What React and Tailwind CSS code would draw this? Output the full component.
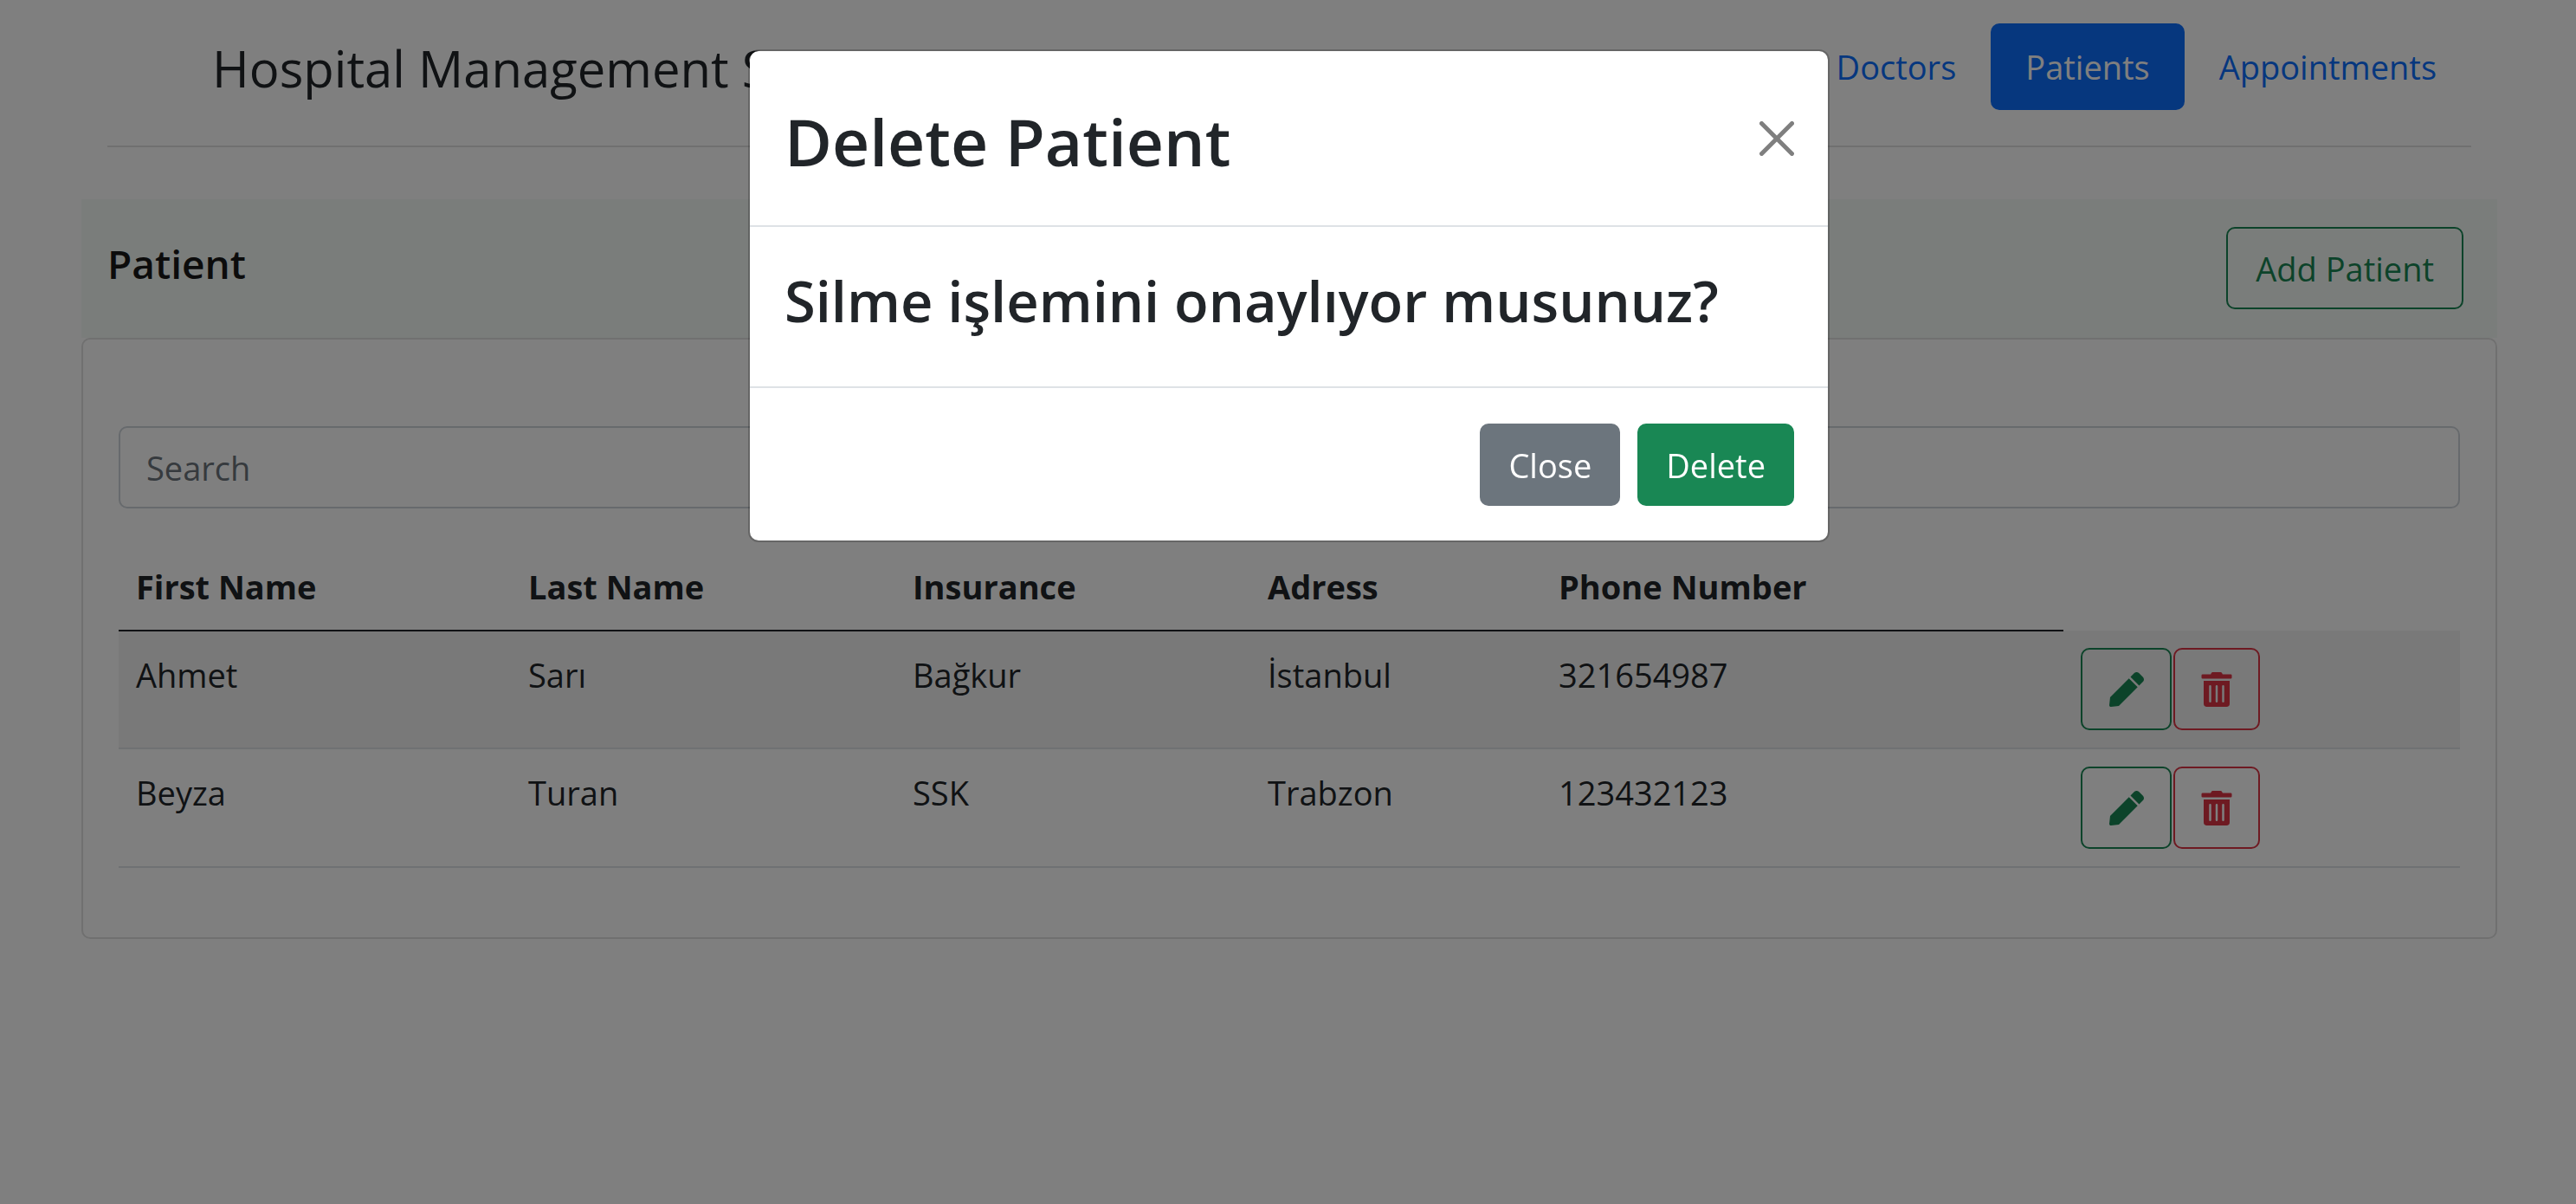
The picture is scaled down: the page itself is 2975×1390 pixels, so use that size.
import { FaPen, FaTrashAlt } from "react-icons/fa";

const patients = [
  { first: "Ahmet", last: "Sarı", insurance: "Bağkur", address: "İstanbul", phone: "321654987" },
  { first: "Beyza", last: "Turan", insurance: "SSK", address: "Trabzon", phone: "123432123" },
];

const headings = ["First Name", "Last Name", "Insurance", "Adress", "Phone Number"];

function Header() {
  return (
    <header className="ml-[124px] mr-[121px] flex items-start justify-between border-b-2 border-black/12 pb-[38px] pt-[27px]">
      <h1 className="ml-[121px] text-[58px] leading-[103px]">Hospital Management System</h1>
      <nav className="flex text-[38px] leading-[60px] text-[#0d6efd]">
        <a href="#doctors" className="rounded-[10px] px-10 py-5">Doctors</a>
        <a href="#patients" className="rounded-[10px] bg-[#0d6efd] px-10 py-5 text-white">Patients</a>
        <a href="#appointments" className="rounded-[10px] px-10 py-5">Appointments</a>
      </nav>
    </header>
  );
}

function PatientTable() {
  return (
    <table className="mt-10 w-full table-fixed border-collapse text-left">
      <colgroup>
        <col className="w-[453px]" />
        <col className="w-[444px]" />
        <col className="w-[410px]" />
        <col className="w-[336px]" />
        <col className="w-[603px]" />
        <col />
      </colgroup>
      <thead>
        <tr>
          {headings.map((h) => (
            <th key={h} className="border-b-2 border-[#212529] px-5 py-5 font-bold">{h}</th>
          ))}
          <td />
        </tr>
      </thead>
      <tbody>
        {patients.map((p) => (
          <tr key={p.first} className="border-b-2 border-[#dee2e6] align-top odd:bg-black/5">
            <td className="px-5 py-5">{p.first}</td>
            <td className="px-5 py-5">{p.last}</td>
            <td className="px-5 py-5">{p.insurance}</td>
            <td className="px-5 py-5">{p.address}</td>
            <td className="px-5 py-5">{p.phone}</td>
            <td className="px-5 py-5">
              <div className="flex gap-[2px]">
                <button aria-label={`Edit ${p.first}`} className="flex h-[95px] w-[105px] items-center justify-center rounded-[10px] border-2 border-[#198754] text-[#198754]">
                  <FaPen size={40} />
                </button>
                <button aria-label={`Delete ${p.first}`} className="flex h-[95px] w-[100px] items-center justify-center rounded-[10px] border-2 border-[#dc3545] text-[#dc3545]">
                  <FaTrashAlt size={40} />
                </button>
              </div>
            </td>
          </tr>
        ))}
      </tbody>
    </table>
  );
}

function DeleteDialog() {
  return (
    <div className="fixed inset-0 bg-black/50 pl-0.5">
      <div
        role="dialog"
        aria-modal="true"
        aria-labelledby="dialog-title"
        className="mx-auto mt-[57px] w-full max-w-[1249px] rounded-[12px] border-2 border-black/20 bg-white bg-clip-padding"
      >
        <div className="flex items-center justify-between border-b-2 border-[#dee2e6] py-[50px] pl-10 pr-[39px]">
          <h2 id="dialog-title" className="pt-2 text-[75px] font-semibold leading-[93px]">Delete Patient</h2>
          <button aria-label="Close dialog">
            <svg viewBox="0 0 16 16" className="size-10 fill-black/50">
              <path d="M.293.293a1 1 0 011.414 0L8 6.586 14.293.293a1 1 0 111.414 1.414L9.414 8l6.293 6.293a1 1 0 01-1.414 1.414L8 9.414l-6.293 6.293a1 1 0 01-1.414-1.414L6.586 8 .293 1.707a1 1 0 010-1.414z" />
            </svg>
          </button>
        </div>
        <div className="px-10 pb-[54px] pt-10">
          <h3 className="text-[65px] font-semibold leading-[90px]">Silme işlemini onaylıyor musunuz?</h3>
        </div>
        <div className="flex justify-end gap-5 border-t-2 border-[#dee2e6] px-[39px] pb-10 pt-[41px]">
          <button className="h-[95px] rounded-[10px] bg-[#6c757d] px-[33px] text-white">Close</button>
          <button className="h-[95px] rounded-[10px] bg-[#198754] px-[33px] text-white">Delete</button>
        </div>
      </div>
    </div>
  );
}

export default function App() {
  return (
    <div className="min-h-screen bg-white font-['Open_Sans','Noto_Sans',sans-serif] text-[38px] leading-[60px] text-[#212529]">
      <Header />
      <main className="ml-[94px] mr-[91px] mt-[60px]">
        <div className="flex items-start justify-between bg-[#f5faf7] pb-[33px] pl-[30px] pr-[39px] pt-8">
          <h2 className="pt-3 text-[46px] font-semibold leading-[60px] text-[#191919]">Patient</h2>
          <button className="h-[95px] rounded-[10px] border-2 border-[#198754] px-[32px] text-[#198754]">Add Patient</button>
        </div>
        <section className="rounded-[10px] border-2 border-black/12 px-[41px] pb-20 pt-[100px]">
          <input
            type="text"
            aria-label="Search"
            placeholder="Search"
            className="h-[95px] w-full rounded-[10px] border-2 border-[#ced4da] px-[30px] placeholder:text-[#6c757d]"
          />
          <PatientTable />
        </section>
      </main>
      <DeleteDialog />
    </div>
  );
}
